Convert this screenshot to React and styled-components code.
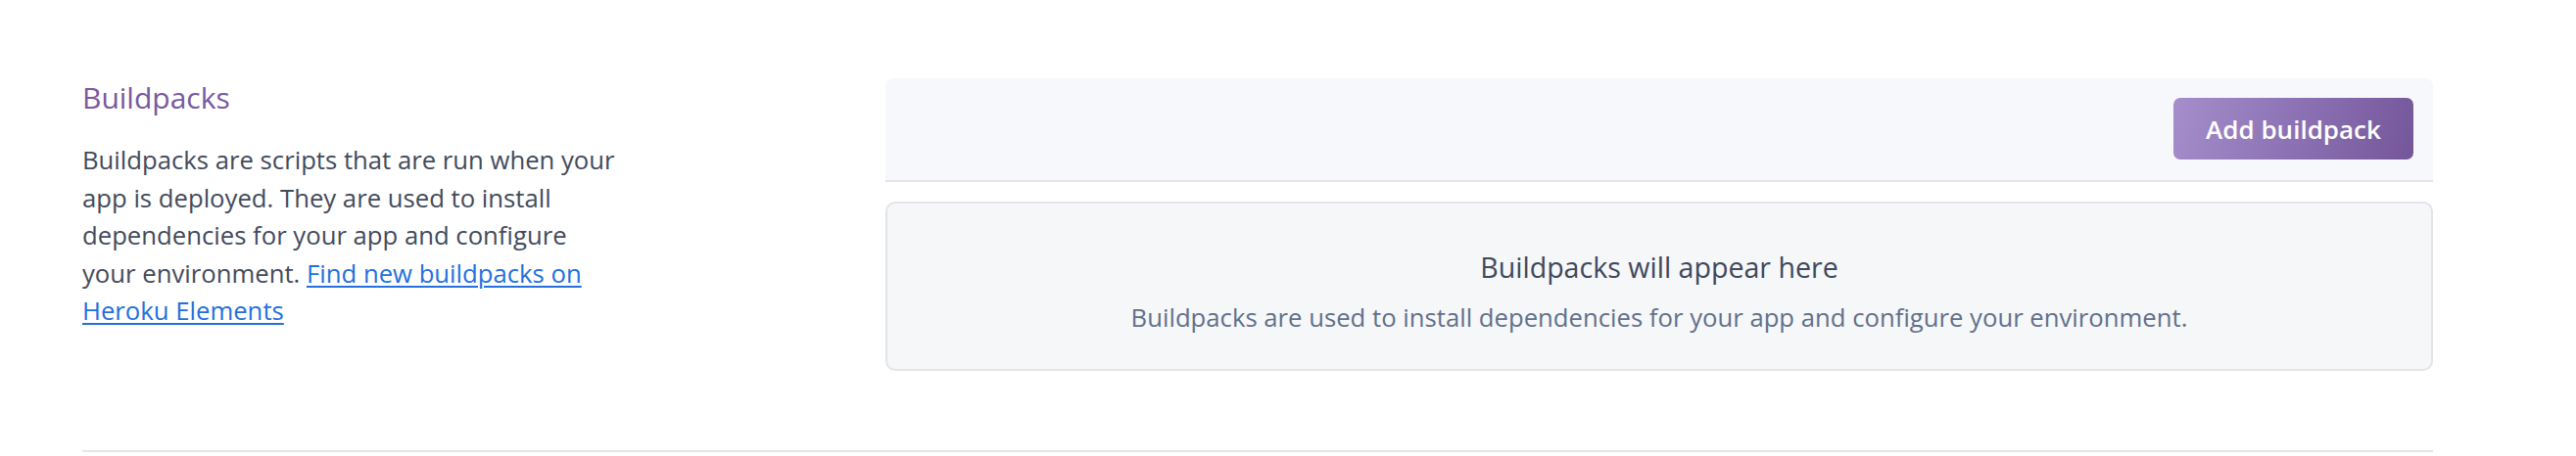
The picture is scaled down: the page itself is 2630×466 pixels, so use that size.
import React from "react";
import styled, { createGlobalStyle } from "styled-components";

const GlobalStyle = createGlobalStyle`
  html, body {
    margin: 0;
    padding: 0;
    background: #ffffff;
    font-family: "Open Sans", "Noto Sans", sans-serif;
  }
`;

const Page = styled.div`
  padding-left: 84px;
  width: 2400px;
`;

const Section = styled.section`
  display: grid;
  grid-template-columns: 820px 1fr;
  padding: 80px 0 81px;
  border-bottom: 2px solid #e4e7ec;
`;

const Info = styled.div`
  display: flex;
  flex-direction: column;
  margin-top: -3px;
`;

const Heading = styled.h2`
  margin: 0;
  font-size: 30px;
  line-height: 45px;
  font-weight: 400;
  color: #79589f;
`;

const Description = styled.p`
  margin: 23px 0 0;
  max-width: 548px;
  font-size: 25.7px;
  line-height: 38.5px;
  color: #434b5c;
`;

const Link = styled.a`
  color: #2470dc;
  text-decoration: underline;
  text-underline-offset: 3px;
  text-decoration-thickness: 2px;
`;

const Panel = styled.div`
  display: flex;
  flex-direction: column;
  gap: 20px;
`;

const Toolbar = styled.div`
  display: flex;
  justify-content: flex-end;
  align-items: center;
  padding: 20px 20px 21px;
  background: #f7f8fb;
  border-radius: 8px 8px 0 0;
  border-bottom: 2px solid #e3e4ed;
`;

const PrimaryButton = styled.button`
  height: 63px;
  width: 245px;
  border: none;
  border-radius: 7px;
  background: linear-gradient(105deg, #a58ecb 0%, #8c72b4 50%, #745699 100%);
  color: #ffffff;
  font-family: "Open Sans", "Noto Sans", sans-serif;
  font-size: 26px;
  font-weight: 600;
  cursor: pointer;
`;

const EmptyState = styled.div`
  display: flex;
  flex-direction: column;
  align-items: center;
  gap: 12px;
  height: 173px;
  box-sizing: border-box;
  padding: 43px 20px 0;
  background: #f6f7f9;
  border: 2px solid #e2e4e8;
  border-radius: 10px;
  text-align: center;
`;

const EmptyTitle = styled.div`
  font-size: 28.6px;
  line-height: 43px;
  color: #3f495c;
`;

const EmptyText = styled.div`
  font-size: 25.7px;
  line-height: 38.5px;
  color: #62708b;
`;

export default function App() {
  return (
    <>
      <GlobalStyle />
      <Page>
        <Section>
          <Info>
            <Heading>Buildpacks</Heading>
            <Description>
              Buildpacks are scripts that are run when your app is deployed.
              They are used to install dependencies for your app and configure
              your environment.{" "}
              <Link href="#">Find new buildpacks on Heroku Elements</Link>
            </Description>
          </Info>
          <Panel>
            <Toolbar>
              <PrimaryButton type="button">Add buildpack</PrimaryButton>
            </Toolbar>
            <EmptyState>
              <EmptyTitle>Buildpacks will appear here</EmptyTitle>
              <EmptyText>
                Buildpacks are used to install dependencies for your app and
                configure your environment.
              </EmptyText>
            </EmptyState>
          </Panel>
        </Section>
      </Page>
    </>
  );
}
